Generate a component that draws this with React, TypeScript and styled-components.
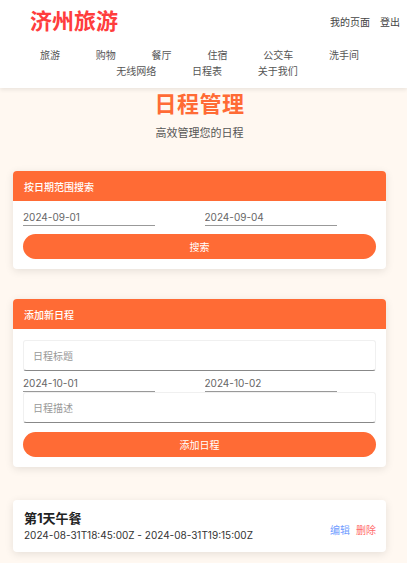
import styled, { createGlobalStyle } from 'styled-components';

const GlobalStyle = createGlobalStyle`
  html, body {
    margin: 0;
    padding: 0;
    background: #fff8f1;
    font-family: Inter, "Noto Sans CJK SC", sans-serif;
  }
  * {
    box-sizing: border-box;
  }
`;

const navRows = [
  { shift: -31, items: ['旅游', '购物', '餐厅', '住宿', '公交车', '洗手间'] },
  { shift: -16, items: ['无线网络', '日程表', '关于我们'] },
];

const App = () => {
  return (
    <>
      <GlobalStyle />
      <Header>
        <TopRow>
          <Brand>济州旅游</Brand>
          <UserLinks>
            <UserLink>我的页面</UserLink>
            <UserLink>登出</UserLink>
          </UserLinks>
        </TopRow>
        <Nav>
          {navRows.map((row, i) => (
            <NavRow key={i} $shift={row.shift}>
              {row.items.map((item) => (
                <NavItem key={item}>{item}</NavItem>
              ))}
            </NavRow>
          ))}
        </Nav>
      </Header>

      <Main>
        <PageTitle>日程管理</PageTitle>
        <Subtitle>高效管理您的日程</Subtitle>

        <Card>
          <CardHeader>按日期范围搜索</CardHeader>
          <CardBody $top={7}>
            <DateRow>
              <DateInput type="text" defaultValue="2024-09-01" />
              <DateInput type="text" defaultValue="2024-09-04" />
            </DateRow>
            <PillButton>搜索</PillButton>
          </CardBody>
        </Card>

        <Card $gap={30}>
          <CardHeader>添加新日程</CardHeader>
          <CardBody $top={11}>
            <TextField placeholder="日程标题" />
            <DateRow $tight>
              <DateInput type="text" defaultValue="2024-10-01" />
              <DateInput type="text" defaultValue="2024-10-02" />
            </DateRow>
            <TextField placeholder="日程描述" />
            <PillButton $top={9}>添加日程</PillButton>
          </CardBody>
        </Card>

        <EventCard>
          <EventInfo>
            <EventTitle>第1天午餐</EventTitle>
            <EventTime>2024-08-31T18:45:00Z - 2024-08-31T19:15:00Z</EventTime>
          </EventInfo>
          <Actions>
            <ActionLink $tone="#6f9cff">编辑</ActionLink>
            <ActionLink $tone="#ff6b6b">删除</ActionLink>
          </Actions>
        </EventCard>
      </Main>
    </>
  );
};

const Header = styled.header`
  background: #fff;
  height: 88px;
  padding: 8px 7px 0 30px;
  box-shadow: 0 2px 4px rgba(0, 0, 0, 0.08);
  position: relative;
  z-index: 1;
`;

const TopRow = styled.div`
  display: flex;
  justify-content: space-between;
  align-items: center;
  height: 26px;
`;

const Brand = styled.h1`
  margin: 0;
  font-size: 22px;
  font-weight: 700;
  color: #ff3d3d;
  line-height: 26px;
`;

const UserLinks = styled.div`
  display: flex;
  gap: 10px;
`;

const UserLink = styled.span`
  font-size: 10px;
  color: #444;
`;

const Nav = styled.nav`
  margin-top: 13px;
  display: flex;
  flex-direction: column;
  line-height: 16px;
`;

const NavRow = styled.div<{ $shift: number }>`
  display: flex;
  justify-content: center;
  margin-left: ${(p) => p.$shift}px;
`;

const NavItem = styled.span`
  font-size: 10px;
  color: #555;
  padding: 0 17.9px;
`;

const Main = styled.main`
  padding: 0 21px 40px 13px;
`;

const PageTitle = styled.h2`
  margin: 0;
  padding-top: 2px;
  text-align: center;
  font-size: 22px;
  font-weight: 700;
  color: #ff6b35;
  line-height: 28px;
  letter-spacing: 0.5px;
`;

const Subtitle = styled.p`
  margin: 7px 0 0;
  text-align: center;
  font-size: 11px;
  color: #555;
  line-height: 16px;
`;

const Card = styled.section<{ $gap?: number }>`
  margin-top: ${(p) => p.$gap ?? 30}px;
  background: #fff;
  border-radius: 4px;
  overflow: hidden;
  box-shadow: 0 2px 8px rgba(0, 0, 0, 0.1);
`;

const CardHeader = styled.div`
  background: #ff6b35;
  height: 30px;
  padding: 0 11px;
  display: flex;
  align-items: center;
  font-size: 10px;
  font-weight: 500;
  color: #fff;
`;

const CardBody = styled.div<{ $top?: number }>`
  padding: ${(p) => p.$top ?? 9}px 10px 10px;
  display: flex;
  flex-direction: column;
`;

const DateRow = styled.div<{ $tight?: boolean }>`
  display: grid;
  grid-template-columns: 1fr 1fr;
  column-gap: 10px;
  height: ${(p) => (p.$tight ? 21 : 18)}px;
  align-items: end;
`;

const DateInput = styled.input`
  width: 132px;
  height: 18px;
  padding: 0;
  border: none;
  border-bottom: 1px solid #999;
  font-family: Inter, "Noto Sans CJK SC", sans-serif;
  font-size: 10px;
  color: #666;
  background: transparent;
  outline: none;
`;

const TextField = styled.input`
  height: 31px;
  width: 100%;
  padding: 0 9px;
  border: 1px solid #f0f0f0;
  border-bottom: 1px solid #888;
  border-radius: 3px;
  background: #fff;
  font-family: Inter, "Noto Sans CJK SC", sans-serif;
  font-size: 10px;
  outline: none;
  &::placeholder {
    color: #999;
  }
`;

const PillButton = styled.button<{ $top?: number }>`
  margin-top: ${(p) => p.$top ?? 8}px;
  height: 25px;
  border: none;
  border-radius: 13px;
  background: #ff6b35;
  color: #fff;
  font-family: Inter, "Noto Sans CJK SC", sans-serif;
  font-size: 10px;
  cursor: pointer;
`;

const EventCard = styled.div`
  margin-top: 33px;
  background: #fff;
  border-radius: 4px;
  box-shadow: 0 2px 8px rgba(0, 0, 0, 0.1);
  height: 52px;
  padding: 0 10px 0 11px;
  display: flex;
  align-items: center;
  justify-content: space-between;
`;

const EventInfo = styled.div`
  display: flex;
  flex-direction: column;
  gap: 2px;
`;

const EventTitle = styled.div`
  font-size: 13px;
  font-weight: 700;
  color: #222;
  line-height: 16px;
`;

const EventTime = styled.div`
  font-size: 10px;
  color: #333;
  line-height: 14px;
`;

const Actions = styled.div`
  display: flex;
  gap: 6px;
  padding-top: 6px;
`;

const ActionLink = styled.span<{ $tone: string }>`
  font-size: 10px;
  color: ${(p) => p.$tone};
`;

export default App;
